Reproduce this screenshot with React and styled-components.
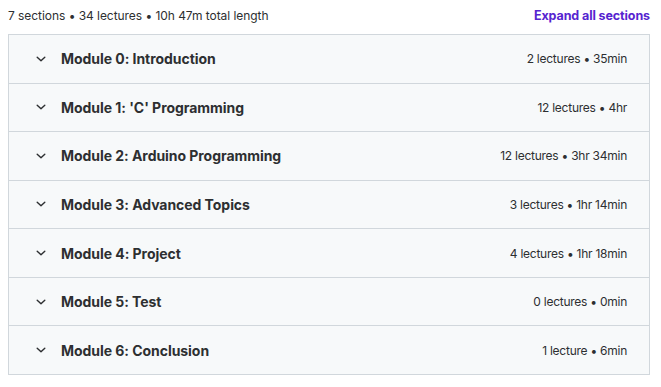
import React from "react";
import styled, { createGlobalStyle } from "styled-components";

const GlobalStyle = createGlobalStyle`
  body {
    margin: 0;
    background: #ffffff;
    font-family: "Inter", "Liberation Sans", Arial, sans-serif;
    color: #2d2f31;
  }
`;

const sections = [
  { title: "Module 0: Introduction", meta: "2 lectures • 35min" },
  { title: "Module 1: 'C' Programming", meta: "12 lectures • 4hr" },
  { title: "Module 2: Arduino Programming", meta: "12 lectures • 3hr 34min" },
  { title: "Module 3: Advanced Topics", meta: "3 lectures • 1hr 14min" },
  { title: "Module 4: Project", meta: "4 lectures • 1hr 18min" },
  { title: "Module 5: Test", meta: "0 lectures • 0min" },
  { title: "Module 6: Conclusion", meta: "1 lecture • 6min" },
];

function Chevron() {
  return (
    <svg width="10" height="6" viewBox="0 0 10 6" fill="none">
      <path d="M1.2 1.2l3.8 3.6 3.8-3.6" stroke="#2d2f31" strokeWidth="1.4" strokeLinecap="round" strokeLinejoin="round" />
    </svg>
  );
}

export default function App() {
  return (
    <Wrapper>
      <GlobalStyle />
      <TopBar>
        <Summary>7 sections • 34 lectures • 10h 47m total length</Summary>
        <ExpandButton>Expand all sections</ExpandButton>
      </TopBar>
      <Panel>
        {sections.map((s) => (
          <SectionRow key={s.title}>
            <IconCell>
              <Chevron />
            </IconCell>
            <Title>{s.title}</Title>
            <Meta>{s.meta}</Meta>
          </SectionRow>
        ))}
      </Panel>
    </Wrapper>
  );
}

const Wrapper = styled.div`
  width: 642px;
  padding: 0 0 0 8px;
`;

const TopBar = styled.div`
  display: flex;
  align-items: center;
  justify-content: space-between;
  height: 30px;
  margin-bottom: 4px;
`;

const Summary = styled.span`
  font-size: 12px;
  letter-spacing: -0.05px;
  color: #2d2f31;
`;

const ExpandButton = styled.button`
  border: none;
  background: none;
  padding: 0;
  font-family: inherit;
  font-size: 12.5px;
  font-weight: 700;
  letter-spacing: -0.1px;
  color: #5624d0;
  cursor: pointer;
`;

const Panel = styled.div`
  border: 1px solid #d1d7dc;
  border-bottom: none;
`;

const SectionRow = styled.div`
  display: flex;
  align-items: center;
  height: 48.57px;
  box-sizing: border-box;
  background: #f7f9fa;
  border-bottom: 1px solid #d1d7dc;
  padding: 0 22px 0 0;
`;

const IconCell = styled.div`
  width: 52px;
  display: flex;
  justify-content: center;
  padding-left: 12px;
  box-sizing: border-box;
`;

const Title = styled.span`
  flex: 1;
  font-size: 14px;
  font-weight: 700;
  letter-spacing: -0.05px;
  color: #2d2f31;
`;

const Meta = styled.span`
  font-size: 12px;
  letter-spacing: -0.25px;
  color: #2d2f31;
`;
